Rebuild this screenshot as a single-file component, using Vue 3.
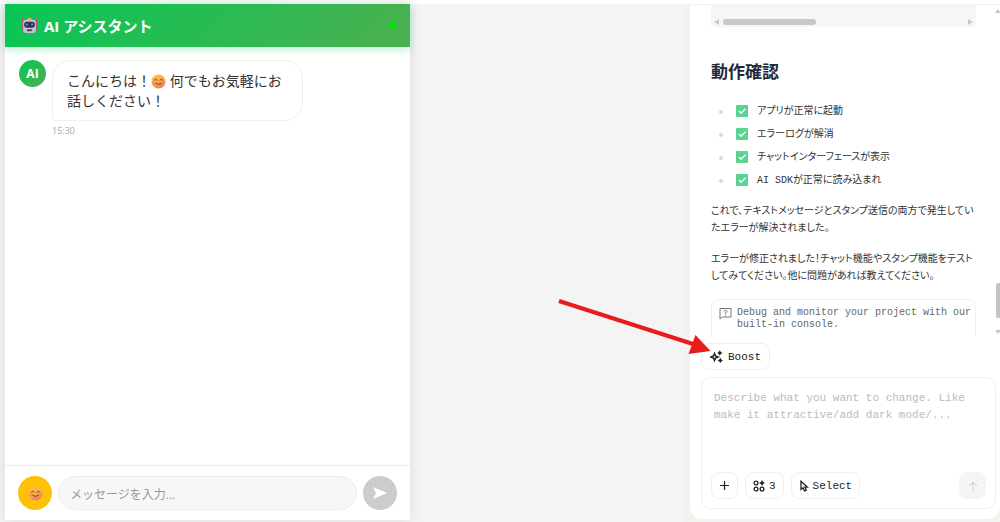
<!-- src/App.vue -->
<template>
  <div class="page">
    <div class="topbar"></div>
    <div class="workspace">
      <main class="preview">
        <section class="chat">
          <header class="chat-header">
            <svg class="robot" viewBox="0 0 32 32" aria-hidden="true">
              <rect x="12" y="2" width="8" height="6" rx="2" fill="#f4b62c" />
              <path d="M3 3v14M29 3v14" stroke="#c8506e" stroke-width="2" stroke-linecap="round" />
              <rect x="1" y="13" width="4" height="11" rx="2" fill="#b8557b" />
              <rect x="27" y="13" width="4" height="11" rx="2" fill="#b8557b" />
              <rect x="4" y="5" width="24" height="25" rx="6" fill="#cdbddb" />
              <rect x="6" y="9" width="20" height="11" rx="5" fill="#31344e" />
              <circle cx="11" cy="14" r="2" fill="#35a8ee" />
              <circle cx="21" cy="14" r="2" fill="#35a8ee" />
              <rect x="11" y="23" width="10" height="4" rx="2" fill="#4b4560" />
            </svg>
            <h1>AI アシスタント</h1>
            <span class="status"></span>
          </header>

          <div class="messages">
            <div class="avatar">AI</div>
            <div>
              <p class="bubble">
                こんにちは！<svg class="smile" viewBox="0 0 32 32" aria-hidden="true"><use href="#smile" /></svg>
                何でもお気軽にお<br />話しください！
              </p>
              <time class="time">15:30</time>
            </div>
          </div>

          <form class="chat-form" @submit.prevent>
            <button type="button" class="round stamp" aria-label="スタンプ">
              <svg class="smile" viewBox="0 0 32 32" aria-hidden="true"><use href="#smile" /></svg>
            </button>
            <input v-model="message" type="text" aria-label="メッセージ" placeholder="メッセージを入力..." />
            <button type="submit" class="round send" aria-label="送信">
              <svg viewBox="0 0 14 12" width="14" height="12" aria-hidden="true">
                <path d="M0 0L14 6L0 12L3 6Z" fill="#fff" />
              </svg>
            </button>
          </form>
        </section>
      </main>

      <div class="side">
        <aside class="panel">
          <div class="scroll">
            <div class="content">
              <div class="code-end">
                <i class="tri left"></i>
                <i class="thumb"></i>
                <i class="tri right"></i>
              </div>
              <h2>動作確認</h2>
              <ul>
                <li v-for="item in checks" :key="item">
                  <svg class="check" viewBox="0 0 12 12" aria-hidden="true">
                    <rect width="12" height="12" rx="1" fill="#5bd28f" />
                    <path d="M3 6L5 8.300L9.500 3.700" fill="none" stroke="#fff" stroke-width="1.3" />
                  </svg>
                  <span>{{ item }}</span>
                </li>
              </ul>
              <p>これで、テキストメッセージとスタンプ送信の両方で発生してい<br />たエラーが解決されました。</p>
              <p>エラーが修正されました！チャット機能やスタンプ機能をテスト<br />してみてください。他に問題があれば教えてください。</p>
              <div class="console">
                <svg viewBox="0 0 13 13" width="13" height="13" aria-hidden="true">
                  <path d="M1 1.5H12V10H3.5L1 12Z" fill="none" stroke="#777" />
                  <path d="M5 4.5Q5 3.3 6.5 3.3T8 4.5Q8 5.3 6.5 5.8V6.8M6.5 7.6V8.6" fill="none" stroke="#777" />
                </svg>
                <span>Debug and monitor your project with our built-in console.</span>
              </div>
            </div>
            <div class="rail">
              <i class="tri up"></i>
              <i class="rail-thumb"></i>
              <i class="tri down"></i>
            </div>
          </div>

          <div class="boost-row">
            <button type="button" class="tool">
              <svg viewBox="0 0 13 13" width="13" height="13" aria-hidden="true">
                <path d="M4.5 3.500L5.500 6L8 7L5.500 8L4.5 10.500L3.500 8L1 7L3.500 6Z" fill="none" stroke="#222" stroke-width="1.5" />
                <path d="M9.8 0.3L10.8 2L12.500 3L10.8 4L9.8 5.7L8.800 4L7.100 3L8.800 2ZM10.3 7.800L11.300 9.5L13 10.5L11.300 11.5L10.3 13L9.300 11.5L7.600 10.5L9.300 9.5Z" fill="#222" />
              </svg>
              Boost
            </button>
            <svg class="pointer" viewBox="0 0 154 58" width="154" height="58" aria-hidden="true">
              <path d="M2 2L136 45" stroke="#e81c1c" stroke-width="4" />
              <path d="M138.500 36L153.500 52L131.500 55Z" fill="#e81c1c" />
            </svg>
          </div>

          <form class="composer" @submit.prevent>
            <textarea
              v-model="prompt"
              rows="4"
              aria-label="Prompt"
              placeholder="Describe what you want to change. Like make it attractive/add dark mode/..."
            ></textarea>
            <div class="tools">
              <button type="button" class="tool square" aria-label="Add">
                <svg viewBox="0 0 9 9" width="9" height="9" aria-hidden="true">
                  <path d="M4.5 0V9M0 4.5H9" stroke="#222" stroke-width="1.2" />
                </svg>
              </button>
              <button type="button" class="tool">
                <svg viewBox="0 0 12 12" width="12" height="12" aria-hidden="true">
                  <g fill="none" stroke="#222" stroke-width="1.3">
                    <circle cx="3" cy="3" r="1.900" />
                    <circle cx="3" cy="9" r="1.900" />
                    <circle cx="9" cy="9" r="1.900" />
                  </g>
                  <path d="M9 0L10.100 1.900L12 3L10.100 4.100L9 6L7.900 4.100L6 3L7.900 1.900Z" fill="#222" />
                </svg>
                3
              </button>
              <button type="button" class="tool">
                <svg viewBox="0 0 10 12" width="10" height="12" aria-hidden="true">
                  <path d="M2 1.200V9.300L4 7.700L5.500 11L7.300 10.200L5.900 7.100H8.300Z" fill="none" stroke="#222" stroke-width="1.300" />
                </svg>
                Select
              </button>
              <button type="submit" class="tool square submit" aria-label="Send">
                <svg viewBox="0 0 10 10" width="10" height="10" aria-hidden="true">
                  <path d="M5 10V1M1 5L5 1L9 5" fill="none" stroke="#ccc" />
                </svg>
              </button>
            </div>
          </form>
        </aside>
      </div>
    </div>

    <svg class="defs" width="0" height="0" aria-hidden="true">
      <defs>
        <linearGradient id="face" x1="0" y1="0" x2="0.4" y2="1">
          <stop offset="0" stop-color="#ffc44d" />
          <stop offset="0.6" stop-color="#f8aa4c" />
          <stop offset="1" stop-color="#f0805e" />
        </linearGradient>
        <symbol id="smile" viewBox="0 0 32 32">
          <circle cx="16" cy="16" r="15" fill="url(#face)" />
          <circle cx="6" cy="19" r="3" fill="#fa8b55" />
          <circle cx="26" cy="19" r="3" fill="#fa8b55" />
          <path d="M7 13Q10 8 13 13M19 13Q22 8 25 13M10 20Q16 25 22 20" fill="none" stroke="#6b4020" stroke-width="2" stroke-linecap="round" />
        </symbol>
      </defs>
    </svg>
  </div>
</template>

<script setup>
import { ref } from 'vue'

const message = ref('')
const prompt = ref('')

const checks = [
  'アプリが正常に起動',
  'エラーログが解消',
  'チャットインターフェースが表示',
  'AI SDKが正常に読み込まれ',
]
</script>

<style>
body {
  margin: 0;
}
</style>

<style scoped>
* {
  box-sizing: border-box;
}

.page {
  display: flex;
  flex-direction: column;
  height: 100vh;
  font-family: "Open Sans", "Noto Sans CJK JP", sans-serif;
  background: #f3f3f1;
}

h1,
h2,
p,
ul {
  margin: 0;
  padding: 0;
}

button,
input,
textarea {
  font: inherit;
  margin: 0;
  outline: none;
}

svg {
  flex-shrink: 0;
}

.topbar {
  height: 4px;
  background: #fff;
}

.workspace {
  flex: 1;
  min-height: 0;
  display: grid;
  grid-template-columns: 68.3% 1fr;
}

/* chat preview */
.preview {
  display: flex;
  padding: 0 5px 2px;
  background: #f4f4f4;
}

.chat {
  display: flex;
  flex-direction: column;
  width: 60.2%;
  background: #fff;
  box-shadow: 0 0 14px rgba(0, 0, 0, 0.1);
}

.chat-header {
  display: flex;
  align-items: center;
  gap: 6px;
  height: 43px;
  padding: 0 14px 0 16px;
  color: #fff;
  background: linear-gradient(135deg, #06c755, #4caf50);
  box-shadow: 0 2px 8px rgba(6, 199, 85, 0.3);
}

.robot {
  width: 17px;
  height: 17px;
}

.chat-header h1 {
  font-size: 15px;
  line-height: 20px;
  font-weight: 700;
}

.status {
  width: 7px;
  height: 7px;
  margin-left: auto;
  border-radius: 50%;
  background: #00e600;
}

.messages {
  flex: 1;
  display: flex;
  align-items: flex-start;
  gap: 6px;
  padding: 13px 14px;
}

.avatar {
  width: 27px;
  height: 27px;
  border-radius: 50%;
  color: #fff;
  font-size: 12px;
  font-weight: 700;
  line-height: 28px;
  text-align: center;
  background: linear-gradient(135deg, #06c755, #4caf50);
}

.bubble {
  padding: 10px 20px 9px 14px;
  border: 1px solid #efefef;
  border-radius: 18px 18px 18px 3px;
  color: #333;
  font-size: 14px;
  line-height: 20px;
  white-space: nowrap;
}

.smile {
  width: 15px;
  height: 15px;
}

.bubble .smile {
  vertical-align: -3px;
}

.time {
  display: block;
  margin-top: 4px;
  color: #aaa;
  font-size: 9px;
  line-height: 12px;
}

.chat-form {
  display: flex;
  gap: 6px;
  padding: 10px 13px;
  border-top: 1px solid #ececec;
}

.round {
  display: flex;
  flex-shrink: 0;
  align-items: center;
  justify-content: center;
  width: 34px;
  height: 34px;
  padding: 0;
  border: 0;
  border-radius: 50%;
}

.stamp {
  background: #ffc107;
}

.send {
  background: #ccc;
}

.chat-form input {
  flex: 1;
  min-width: 0;
  height: 34px;
  padding: 2px 11px 0;
  border: 1px solid #ececec;
  border-radius: 17px;
  background: #f7f7f7;
  font-size: 12px;
}

.chat-form input::placeholder {
  color: #999;
}

/* assistant panel */
.side {
  display: flex;
  min-width: 0;
  min-height: 0;
  padding: 0 0 3px 7px;
  background: #f3f2ee;
}

.panel {
  flex: 1;
  min-width: 0;
  display: flex;
  flex-direction: column;
  padding-bottom: 10px;
  border-top: 1px solid #f3f3f3;
  border-radius: 0 0 12px 12px;
  background: #fff;
  font-family: "Liberation Mono", "Noto Sans CJK JP", monospace;
  font-size: 11px;
}

.scroll {
  flex: 1;
  min-height: 0;
  display: flex;
  overflow: hidden;
}

.content {
  flex: 1;
  min-width: 0;
  padding: 0 24px 0 21px;
  color: #333;
  font-size: 10px;
  line-height: 17px;
  font-feature-settings: "palt";
}

.code-end {
  display: flex;
  align-items: flex-end;
  gap: 4px;
  height: 22px;
  padding: 0 3px 2px;
  border-radius: 0 0 4px 4px;
  background: #f6f6f6;
}

.thumb {
  width: 36%;
  height: 6px;
  border-radius: 3px;
  background: #c8c8c8;
}

.tri {
  border: 3px solid transparent;
}

.tri.left {
  border-left-width: 0;
  border-right: 5px solid #c8c8c8;
}

.tri.right {
  margin-left: auto;
  border-right-width: 0;
  border-left: 5px solid #c8c8c8;
}

h2 {
  margin: 35px 0 14px;
  color: #1e293b;
  font-size: 17px;
  line-height: 24px;
  font-weight: 700;
  font-feature-settings: normal;
}

ul {
  margin-bottom: 11px;
  list-style: none;
}

li {
  display: flex;
  align-items: center;
  height: 23px;
  padding-left: 8px;
}

li::before {
  content: "";
  width: 4px;
  height: 4px;
  margin-right: 13px;
  border-radius: 50%;
  background: #d3dae4;
}

.check {
  width: 12px;
  height: 12px;
  margin: 0 9px 2px 0;
}

.content p {
  margin-bottom: 14px;
  white-space: nowrap;
}

.console {
  display: flex;
  gap: 5px;
  height: 60px;
  padding: 7px 2px 7px 7px;
  border: 1px solid #efefef;
  border-radius: 8px;
  color: #666;
  line-height: 12px;
}

.rail {
  display: flex;
  flex-direction: column;
  align-items: center;
  width: 4px;
  margin-left: -4px;
  padding: 4px 0 1px;
}

.rail-thumb {
  width: 4px;
  height: 35px;
  margin: auto 0 12px;
  border-radius: 2px 0 0 2px;
  background: #c4c4c4;
}

.tri.up {
  border-top-width: 0;
  border-bottom: 4px solid #c8c8c8;
}

.tri.down {
  border-bottom-width: 0;
  border-top: 4px solid #c8c8c8;
}

.tool {
  display: flex;
  align-items: center;
  justify-content: center;
  gap: 5px;
  height: 27px;
  padding: 0 8px;
  border: 1px solid #efefef;
  border-radius: 8px;
  color: #222;
  background: #fff;
}

.boost-row {
  position: relative;
  display: flex;
  margin: 8px 11px 7px;
}

.pointer {
  position: absolute;
  left: -144px;
  top: -44px;
}

.composer {
  display: flex;
  flex-direction: column;
  margin: 0 4px 0 11px;
  padding: 12px 9px 9px;
  border: 1px solid #efefef;
  border-radius: 10px;
}

textarea {
  height: 82px;
  padding: 0 3px;
  border: 0;
  resize: none;
  background: transparent;
  line-height: 17px;
}

textarea::placeholder {
  color: #bbb;
}

.tools {
  display: flex;
  gap: 7px;
}

.tools .tool {
  gap: 4px;
  padding: 0 7px;
}

.tools .square {
  width: 27px;
  padding: 0;
}

.submit {
  margin-left: auto;
  border-color: #f5f5f5;
  background: #f5f5f5;
}

.defs {
  position: absolute;
}
</style>
